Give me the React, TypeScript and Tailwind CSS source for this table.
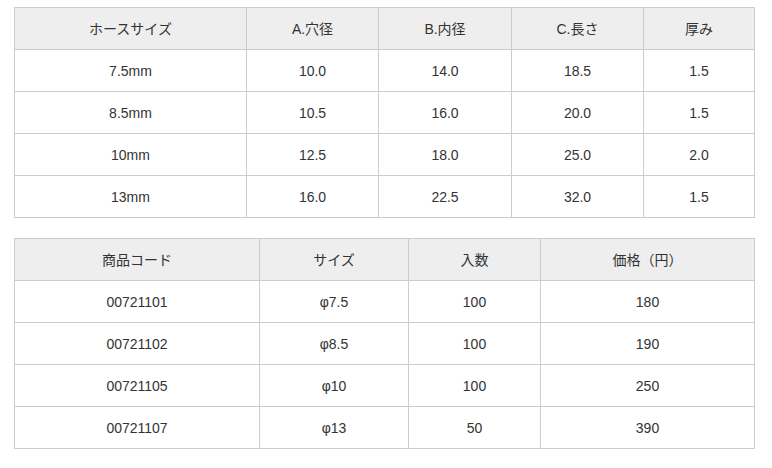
const sizeRows = [
  ['7.5mm', '10.0', '14.0', '18.5', '1.5'],
  ['8.5mm', '10.5', '16.0', '20.0', '1.5'],
  ['10mm', '12.5', '18.0', '25.0', '2.0'],
  ['13mm', '16.0', '22.5', '32.0', '1.5'],
];

const priceRows = [
  ['00721101', 'φ7.5', '100', '180'],
  ['00721102', 'φ8.5', '100', '190'],
  ['00721105', 'φ10', '100', '250'],
  ['00721107', 'φ13', '50', '390'],
];

const cell = 'border border-[#cccccc] h-[42px] p-0 text-center align-middle';

export default function App() {
  return (
    <div
      className="bg-white w-[772px] h-[468px] pl-[14px] pt-[7px] text-[14px] leading-[20px] text-[#333333]"
      style={{ fontFamily: '"Liberation Sans", Arial, "Noto Sans CJK JP", sans-serif' }}
    >
      {/* hose sizes */}
      <table className="border-collapse table-fixed w-[740px]">
        <colgroup>
          <col className="w-[232px]" />
          <col className="w-[132px]" />
          <col className="w-[133px]" />
          <col className="w-[132px]" />
          <col className="w-[111px]" />
        </colgroup>
        <thead>
          <tr className="bg-[#eeeeee]">
            <th className={`${cell} font-normal`}>ホースサイズ</th>
            <th className={`${cell} font-normal`}>A.穴径</th>
            <th className={`${cell} font-normal`}>B.内径</th>
            <th className={`${cell} font-normal`}>C.長さ</th>
            <th className={`${cell} font-normal`}>厚み</th>
          </tr>
        </thead>
        <tbody>
          {sizeRows.map((r) => (
            <tr key={r[0]}>
              {r.map((v, i) => (
                <td key={i} className={cell}>{v}</td>
              ))}
            </tr>
          ))}
        </tbody>
      </table>

      {/* product codes / prices */}
      <table className="border-collapse table-fixed w-[740px] mt-[20px]">
        <colgroup>
          <col className="w-[245px]" />
          <col className="w-[149px]" />
          <col className="w-[132px]" />
          <col className="w-[214px]" />
        </colgroup>
        <thead>
          <tr className="bg-[#eeeeee]">
            <th className={`${cell} font-normal`}>商品コード</th>
            <th className={`${cell} font-normal`}>サイズ</th>
            <th className={`${cell} font-normal`}>入数</th>
            <th className={`${cell} font-normal`}>価格（円）</th>
          </tr>
        </thead>
        <tbody>
          {priceRows.map((r) => (
            <tr key={r[0]}>
              {r.map((v, i) => (
                <td key={i} className={cell}>{v}</td>
              ))}
            </tr>
          ))}
        </tbody>
      </table>
    </div>
  );
}
